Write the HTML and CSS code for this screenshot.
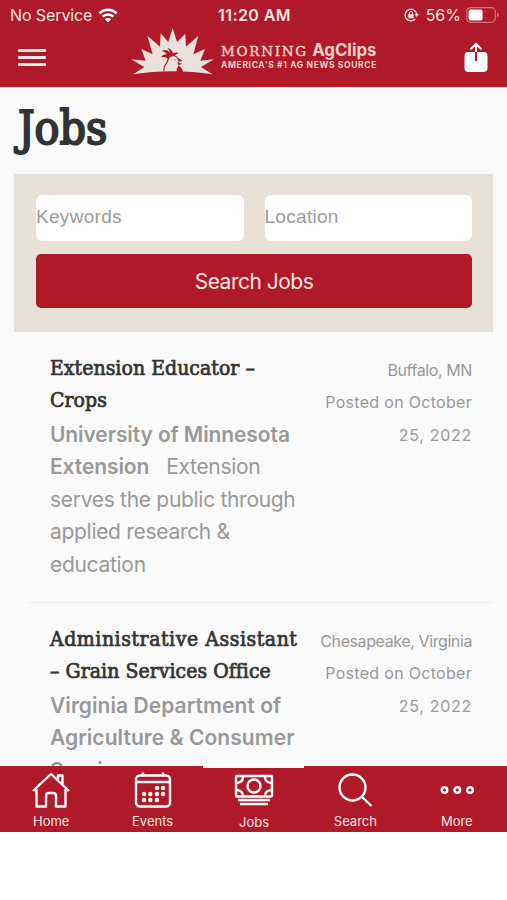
FILE: index.html
```html
<!DOCTYPE html>
<html lang="en">
<head>
    <meta charset="UTF-8">
    <meta name="viewport" content="width=device-width, initial-scale=1.0">
    <title>Jobs - Morning AgClips</title>
    <link rel="stylesheet" href="styles.css">
</head>
<body>
    <header class="app-header">
        <div class="status-bar">
            <div class="status-left">
                <span class="carrier">No Service</span>
                <svg class="wifi" width="20" height="15" viewBox="0 0 20 15">
                    <path d="M1.4 5.2a12.4 12.4 0 0 1 17.2 0M4.6 8.6a7.8 7.8 0 0 1 10.8 0" fill="none" stroke="currentColor" stroke-width="2.6"/>
                    <path d="M6.8 11.2a4.6 4.6 0 0 1 6.4 0L10 14.6z" fill="currentColor"/>
                </svg>
            </div>
            <div class="clock">11:20 AM</div>
            <div class="status-right">
                <svg class="lock" width="15" height="14" viewBox="0 0 15 14">
                    <path d="M12.7 6.2A5.8 5.8 0 1 0 11.2 11" fill="none" stroke="currentColor" stroke-width="1.3"/>
                    <path d="M10.6 6h4.2l-2.1 3z" fill="currentColor"/>
                    <rect x="4.3" y="6" width="5.4" height="4.2" rx=".6" fill="currentColor"/>
                    <path d="M5.4 6.3V5a1.6 1.6 0 0 1 3.2 0v1.3" fill="none" stroke="currentColor" stroke-width="1"/>
                </svg>
                <span class="battery-text">56%</span>
                <svg width="33" height="16" viewBox="0 0 33 16">
                    <rect x=".7" y=".7" width="28.6" height="14.6" rx="4" fill="none" stroke="#d0737e" stroke-width="1.2"/>
                    <rect x="2.6" y="2.6" width="14" height="10.8" rx="2" fill="#fff"/>
                    <path d="M31 5.5v5q1.7-.8 1.7-2.5T31 5.5z" fill="#d0737e"/>
                </svg>
            </div>
        </div>
        <div class="nav-bar">
            <button class="menu" aria-label="Menu"><i></i><i></i><i></i></button>
            <div class="brand">
                <svg class="sunrise" width="83" height="48" viewBox="18 20 249 144">
                    <path fill="#e9e2d8" d="M25 159 58 137 19 114 62 118 49 83 83 99 67 43 105 76 107 36 130 62 143 20 156 62 181 37 183 76 220 43 205 99 240 83 226 118 267 114 228 137 262 159Q205 150 143 150T25 159z"/>
                    <path fill="#b01a28" d="M129 112Q121 104 109 108 113 98 126 99 121 91 110 88 124 83 135 93 133 85 127 81 139 81 144 96 153 91 161 95 153 98 149 104 137 103 131 112z"/>
                    <path fill="none" stroke="#b01a28" stroke-width="3.5" d="M131 110Q127 124 120 132 116 139 117 150M148 104Q157 106 160 114"/>
                    <path fill="#b01a28" d="M159 110 173 118 160 121zM157 121 170 127 161 133zM160 133Q154 140 155 152H174Q173 138 160 133z"/>
                    <circle cx="150" cy="116" r="1.8" fill="#b01a28"/>
                </svg>
                <div class="wordmark">
                    <div class="name"><span class="morning">MORNING</span> <span class="agclips">AgClips</span></div>
                    <div class="tagline">AMERICA'S #1 AG NEWS SOURCE</div>
                </div>
            </div>
            <svg class="share" width="26" height="30" viewBox="0 0 26 30">
                <rect x="1.5" y="10" width="23" height="20" rx="4" fill="#fff"/>
                <path d="M13 9v10" stroke="#b01a28" stroke-width="2"/>
                <path d="M13 10V2M7.5 7.3 13 2l5.5 5.3" fill="none" stroke="#fff" stroke-width="2"/>
            </svg>
        </div>
    </header>

    <main class="content">
        <h1>Jobs</h1>

        <form class="search-form">
            <div class="fields">
                <input type="text" placeholder="Keywords">
                <input type="text" placeholder="Location">
            </div>
            <button type="button" class="search-button">Search Jobs</button>
        </form>

        <article class="job">
            <div class="job-main">
                <h2>Extension Educator –<br>Crops</h2>
                <p><strong>University of Minnesota<br>Extension</strong> <span class="excerpt">Extension<br>serves the public through<br>applied research &amp;<br>education</span></p>
            </div>
            <div class="job-meta">
                <div class="place">Buffalo, MN</div>
                <div class="date">Posted on October<br><span class="day">25, 2022</span></div>
            </div>
        </article>

        <article class="job">
            <div class="job-main">
                <h2><span class="wide">Administrative Assistant</span><br>– Grain Services Office</h2>
                <p><strong class="wide-company">Virginia Department of<br>Agriculture &amp; Consumer<br>Services</strong></p>
            </div>
            <div class="job-meta">
                <div class="place">Chesapeake, Virginia</div>
                <div class="date">Posted on October<br><span class="day">25, 2022</span></div>
            </div>
        </article>
    </main>

    <nav class="tab-bar">
        <a class="tab">
            <svg width="40" height="38" viewBox="0 0 40 38">
                <path d="M2 20 20 3l18 17M5.5 18v17.5h9.5V25q0-3 3-3h4q3 0 3 3v10.5h9.5V18M27 8.5V4.5h4.5V13"/>
            </svg>
            <span>Home</span>
        </a>
        <a class="tab">
            <svg width="40" height="38" viewBox="0 0 40 38">
                <rect x="3" y="4.5" width="34" height="31" rx="4"/>
                <path d="M3 11h34M10 1.5v4M30 1.5v4"/>
                <g class="dots">
                    <circle cx="24" cy="17" r="2.2"/><circle cx="30" cy="17" r="2.2"/>
                    <circle cx="11" cy="23" r="2.2"/><circle cx="17.3" cy="23" r="2.2"/><circle cx="24" cy="23" r="2.2"/><circle cx="30" cy="23" r="2.2"/>
                    <circle cx="11" cy="29" r="2.2"/><circle cx="17.3" cy="29" r="2.2"/><circle cx="24" cy="29" r="2.2"/>
                </g>
            </svg>
            <span>Events</span>
        </a>
        <a class="tab active">
            <svg width="40" height="38" viewBox="0 0 40 38">
                <rect x="2" y="4" width="36" height="20.5" rx="1"/>
                <circle cx="20" cy="14" r="6.5"/>
                <path d="M3 11q6-1 6-6M3 18q6 1 6 6M37 11q-6-1-6-6M37 18q-6 1-6 6M4 28h32M6 32h28"/>
            </svg>
            <span>Jobs</span>
        </a>
        <a class="tab">
            <svg width="40" height="38" viewBox="0 0 40 38">
                <circle cx="17.5" cy="16.5" r="13"/>
                <path d="m27 26 9.5 9"/>
            </svg>
            <span>Search</span>
        </a>
        <a class="tab">
            <svg width="40" height="38" viewBox="0 0 40 38">
                <circle cx="7.5" cy="19" r="2.8"/><circle cx="20.3" cy="19" r="2.8"/><circle cx="33" cy="19" r="2.8"/>
            </svg>
            <span>More</span>
        </a>
    </nav>
</body>
</html>
```

FILE: styles.css
```css
:root {
    --red: #b01a28;
    --page: #fafafa;
    --sand: #e7e1d8;
    --ink: #333;
    --gray: #999;
}

* {
    box-sizing: border-box;
}

body {
    margin: 0;
    height: 900px;
    display: flex;
    flex-direction: column;
    overflow: hidden;
    background: #fff;
    font-family: Inter, "Liberation Sans", sans-serif;
    white-space: nowrap;
}

/* Header */
.app-header {
    height: 87px;
    background: var(--red);
    color: #f8e2e3;
}

.status-bar {
    height: 30px;
    display: grid;
    grid-template-columns: 1fr auto 1fr;
    align-items: center;
    padding: 0 8px 0 10px;
    font-size: 16px;
}

.status-left,
.status-right {
    display: flex;
    align-items: center;
    gap: 6px;
}

.status-right {
    justify-content: flex-end;
}

.carrier {
    letter-spacing: -0.1px;
}

.battery-text {
    margin-left: 1px;
    margin-right: -1px;
}

.wifi {
    color: #fff;
}

.clock {
    font-weight: 600;
    letter-spacing: 0.4px;
}

.nav-bar {
    height: 57px;
    display: flex;
    align-items: flex-start;
    padding: 0 18px;
}

.menu {
    display: flex;
    flex-direction: column;
    gap: 4.5px;
    width: 28px;
    margin-top: 19px;
    padding: 0;
    border: 0;
    background: none;
}

.menu i {
    height: 2.5px;
    border-radius: 1px;
    background: #fbe9ea;
}

.brand {
    display: flex;
    flex: 1;
    padding-left: 85px;
    margin-top: -2px;
}

.wordmark {
    padding: 12px 0 0 7px;
    color: #f0cfcb;
}

.name {
    height: 20px;
    line-height: 20px;
}

.morning {
    font-family: "DejaVu Serif", serif;
    font-size: 13.5px;
    letter-spacing: 1.7px;
    -webkit-text-stroke: 0.4px;
}

.agclips {
    font-size: 16.8px;
    font-weight: 700;
}

.tagline {
    font-size: 8.5px;
    font-weight: 700;
    line-height: 10px;
    letter-spacing: 0.65px;
}

.share {
    margin: 12px 0 0;
}

/* Page */
.content {
    height: 679px;
    overflow: hidden;
    background: var(--page);
    padding: 0 14px 0 15px;
}

h1 {
    margin: 0;
    height: 87px;
    padding-left: 3px;
    line-height: 82px;
    font-family: "DejaVu Serif Condensed", "DejaVu Serif", serif;
    font-stretch: condensed;
    font-size: 46px;
    font-weight: 400;
    letter-spacing: 0;
    -webkit-text-stroke: 2px;
    color: var(--ink);
}

.search-form {
    height: 158px;
    margin-left: -1px;
    padding: 21px 21px 0 22px;
    background: var(--sand);
}

.fields {
    display: flex;
    gap: 21px;
}

.fields input {
    flex: 1;
    min-width: 0;
    height: 46px;
    padding: 0 0 2px;
    border: 0;
    border-radius: 6px;
    background: #fff;
    font: 19px "Liberation Sans", sans-serif;
    letter-spacing: 0.3px;
}

.fields input::placeholder {
    color: #9b9b9b;
}

.search-button {
    width: 100%;
    height: 54px;
    margin-top: 13px;
    border: 0;
    border-radius: 5px;
    background: var(--red);
    color: #fbe3e4;
    font: 21px Inter, sans-serif;
    letter-spacing: -0.5px;
}

.job {
    display: flex;
    justify-content: space-between;
    height: 271px;
    margin-left: 13px;
    padding: 20px 21px 0 22px;
    border-bottom: 1px solid #eee;
    line-height: 32.3px;
    color: var(--gray);
}

.job h2 {
    margin: 0 0 2px;
    font-family: "DejaVu Serif Condensed", "DejaVu Serif", serif;
    font-stretch: condensed;
    font-size: 21px;
    font-weight: 400;
    line-height: 32.3px;
    letter-spacing: 0.05px;
    -webkit-text-stroke: 0.7px;
    color: var(--ink);
}

.job h2 .wide {
    letter-spacing: 0.55px;
}

.job p {
    margin: 0;
    font-size: 21px;
    line-height: 32.6px;
}

.job strong {
    font-weight: 600;
    letter-spacing: -0.1px;
}

.job .wide-company {
    letter-spacing: 0.06px;
}

.excerpt {
    margin-left: 11px;
    letter-spacing: -0.3px;
}

.job-meta {
    padding-top: 2px;
    text-align: right;
    font-size: 16px;
}

.place {
    letter-spacing: -0.4px;
}

.date {
    letter-spacing: 0.3px;
}

.day {
    letter-spacing: 0.7px;
}

/* Bottom tabs */
.tab-bar {
    height: 66px;
    display: grid;
    grid-template-columns: repeat(5, 1fr);
    background: var(--red);
    color: #fbe3e4;
}

.tab {
    display: flex;
    flex-direction: column;
    align-items: center;
    padding: 5px 0 0 1px;
    font-size: 13px;
    line-height: 24px;
}

.tab svg {
    fill: none;
    stroke: #fff;
    stroke-width: 2.4;
    stroke-linejoin: round;
}

.tab .dots {
    fill: #fff;
    stroke: none;
}

.tab.active {
    border-top: 2px solid var(--page);
    padding-top: 4px;
}
```
